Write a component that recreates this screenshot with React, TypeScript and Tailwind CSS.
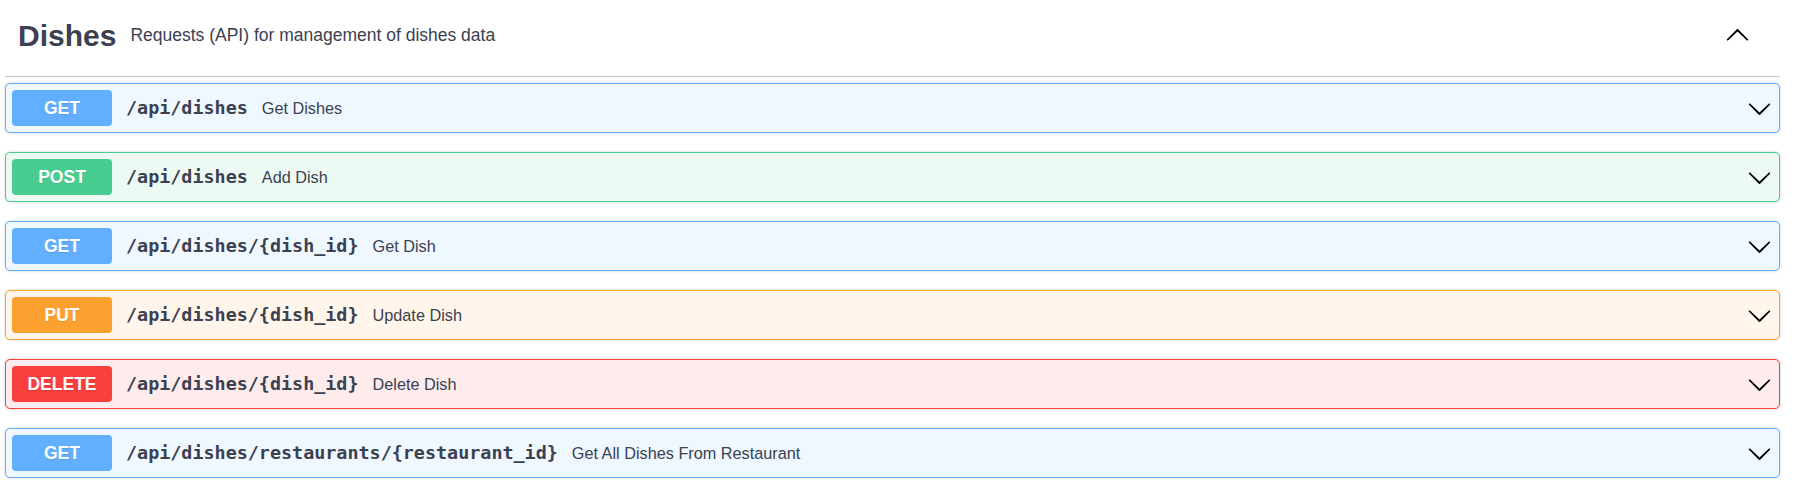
import React from "react";

type Op = {
  method: "GET" | "POST" | "PUT" | "DELETE";
  path: string;
  summary: string;
};

const ops: Op[] = [
  { method: "GET", path: "/api/dishes", summary: "Get Dishes" },
  { method: "POST", path: "/api/dishes", summary: "Add Dish" },
  { method: "GET", path: "/api/dishes/{dish_id}", summary: "Get Dish" },
  { method: "PUT", path: "/api/dishes/{dish_id}", summary: "Update Dish" },
  { method: "DELETE", path: "/api/dishes/{dish_id}", summary: "Delete Dish" },
  {
    method: "GET",
    path: "/api/dishes/restaurants/{restaurant_id}",
    summary: "Get All Dishes From Restaurant",
  },
];

const styles: Record<Op["method"], { row: string; badge: string }> = {
  GET: { row: "bg-[#eff7ff] border-[#61affe]", badge: "bg-[#61affe]" },
  POST: { row: "bg-[#edfaf4] border-[#49cc90]", badge: "bg-[#49cc90]" },
  PUT: { row: "bg-[#fff5ea] border-[#fca130]", badge: "bg-[#fca130]" },
  DELETE: { row: "bg-[#feebeb] border-[#f93e3e]", badge: "bg-[#f93e3e]" },
};

const Arrow = ({ up }: { up?: boolean }) => (
  <svg
    width="25"
    height="25"
    viewBox="0 0 20 20"
    className={up ? "rotate-180" : ""}
    fill="#000"
  >
    <path d="M17.418 6.109c.272-.268.709-.268.979 0s.271.701 0 .969l-7.908 7.83c-.27.268-.707.268-.979 0l-7.908-7.83c-.27-.268-.27-.701 0-.969.271-.268.709-.268.979 0L10 13.25l7.418-7.141z" />
  </svg>
);

const OpRow = ({ op }: { op: Op }) => {
  const s = styles[op.method];
  return (
    <div
      className={`flex items-center h-[50px] px-[6px] border rounded-[5px] shadow-[0_0_3px_rgba(0,0,0,0.19)] ${s.row}`}
    >
      <div
        className={`flex items-center justify-center w-[100px] h-[36px] rounded-[4px] text-white font-bold text-[17.5px] [text-shadow:0_1px_0_rgba(0,0,0,0.1)] ${s.badge}`}
      >
        {op.method}
      </div>
      <span className="ml-[14px] font-['DejaVu_Sans_Mono',monospace] font-bold text-[18.4px] text-[#3b4151]">
        {op.path}
      </span>
      <span className="ml-[14px] text-[16.25px] text-[#3b4151]">{op.summary}</span>
      <div className="ml-auto mr-[1px] flex items-center">
        <Arrow />
      </div>
    </div>
  );
};

export default function App() {
  return (
    <div className="bg-white min-h-[493px] pl-[5px] pr-[17px] font-['Liberation_Sans',Arial,sans-serif]">
      <div className="flex items-center h-[77px] pb-[5px] pl-[13px] pr-[30px] border-b border-[#c4c6cb] text-[#3b4151]">
        <h3 className="text-[30px] font-bold">Dishes</h3>
        <p className="ml-[14px] text-[17.5px]">
          Requests (API) for management of dishes data
        </p>
        <div className="ml-auto flex items-center">
          <Arrow up />
        </div>
      </div>
      <div className="flex flex-col gap-[19px] pt-[6px]">
        {ops.map((op, i) => (
          <OpRow key={i} op={op} />
        ))}
      </div>
    </div>
  );
}
